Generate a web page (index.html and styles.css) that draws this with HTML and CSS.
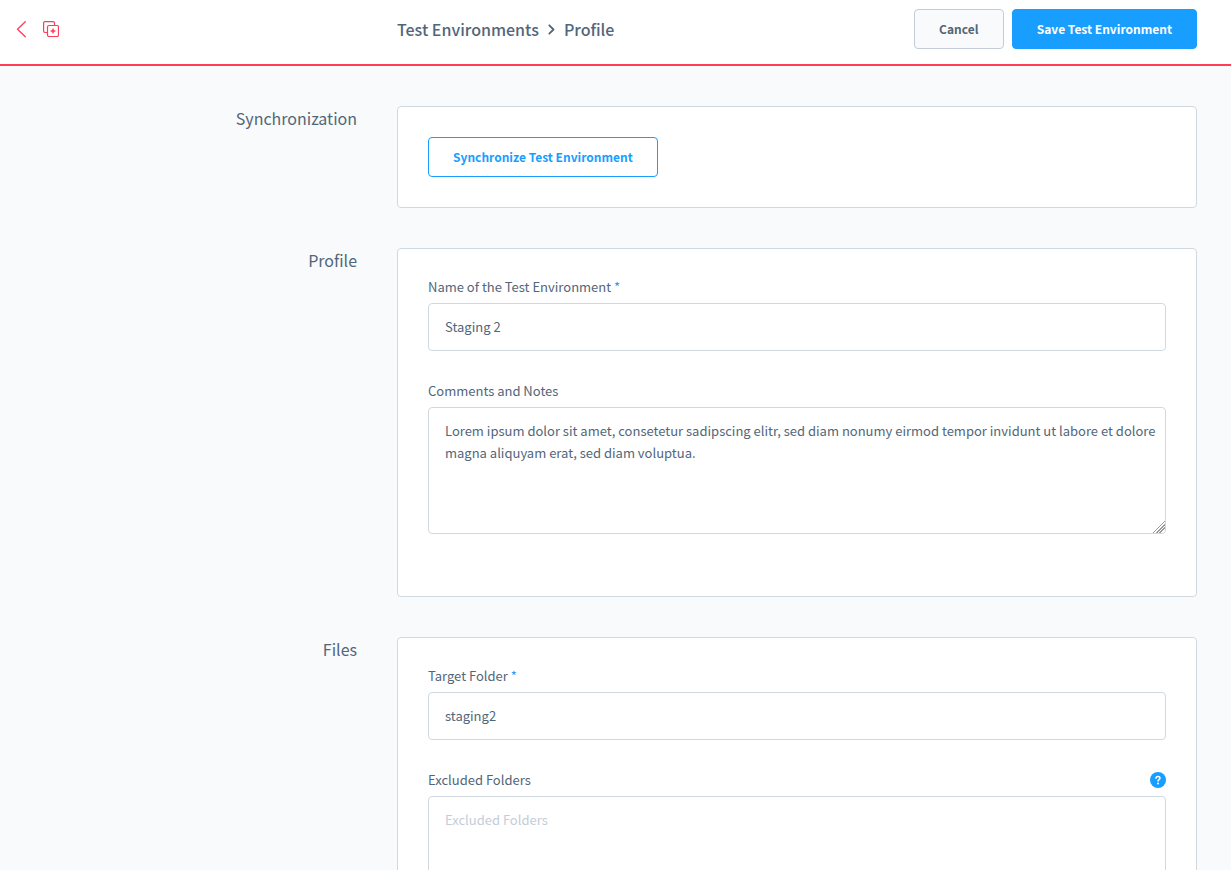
FILE: index.html
```html
<!DOCTYPE html>
<html lang="en">
<head>
<meta charset="utf-8">
<meta name="viewport" content="width=device-width, initial-scale=1">
<title>Test Environments - Profile</title>
<link rel="stylesheet" href="styles.css">
</head>
<body class="app">
<header class="header">
  <nav class="header-nav" aria-label="Module">
    <a class="icon-link" href="#" aria-label="Back">
      <svg width="10" height="17" viewBox="0 0 10 17" fill="none" stroke="currentColor" stroke-width="1.3" stroke-linecap="round" stroke-linejoin="round"><path d="M9.300 .8 1.500 8.300 9.300 15.800"/></svg>
    </a>
    <a class="icon-link" href="#" aria-label="Test environments">
      <svg width="16" height="16" viewBox="0 0 16 16" fill="none" stroke="currentColor" stroke-width="1.2" stroke-linecap="round" stroke-linejoin="round"><path d="M4.200 11.500H2A1.400 1.400 0 0 1 .6 10.100V2A1.400 1.400 0 0 1 2 .6h8.100A1.400 1.400 0 0 1 11.500 2v2.200"/><rect x="4.500" y="4.500" width="11" height="11" rx="1.500"/><path d="M10 8.200v3.600M8.200 10h3.600" stroke-width="1.600"/></svg>
    </a>
  </nav>
  <h1 class="title">
    <span>Test Environments</span>
    <svg width="7" height="11" viewBox="0 0 7 11" fill="none" stroke="currentColor" stroke-width="1.8" stroke-linecap="round" stroke-linejoin="round"><path d="M1.300 1.300 5.500 5.500 1.300 9.700"/></svg>
    <span>Profile</span>
  </h1>
  <div class="actions">
    <button class="button" type="button">Cancel</button>
    <button class="button button-primary" type="submit" form="profile-form">Save Test Environment</button>
  </div>
</header>
<main class="content">
  <form class="sections" id="profile-form">
    <section class="section">
      <h2 class="section-title">Synchronization</h2>
      <div class="card">
        <button class="button button-outline" type="button">Synchronize Test Environment</button>
      </div>
    </section>
    <section class="section">
      <h2 class="section-title">Profile</h2>
      <div class="card">
        <div class="field">
          <div class="field-head"><label for="name">Name of the Test Environment <span class="required">*</span></label></div>
          <input class="control" id="name" type="text" value="Staging 2">
        </div>
        <div class="field">
          <div class="field-head"><label for="notes">Comments and Notes</label></div>
          <textarea class="control control-area" id="notes" spellcheck="false">Lorem ipsum dolor sit amet, consetetur sadipscing elitr, sed diam nonumy eirmod tempor invidunt ut labore et dolore magna aliquyam erat, sed diam voluptua.</textarea>
        </div>
      </div>
    </section>
    <section class="section">
      <h2 class="section-title">Files</h2>
      <div class="card">
        <div class="field">
          <div class="field-head"><label for="folder">Target Folder <span class="required">*</span></label></div>
          <input class="control" id="folder" type="text" value="staging2">
        </div>
        <div class="field">
          <div class="field-head">
            <label for="excluded">Excluded Folders</label>
            <button class="help" type="button" aria-label="Help">
              <svg width="16" height="16" viewBox="0 0 16 16" fill="none"><circle cx="8" cy="8" r="8" fill="#189eff"/><path d="M6 6.300C6 5 6.900 4.400 8 4.400s2 .7 2 1.800c0 1.400-2 1.400-2 2.800" stroke="#fff" stroke-width="1.500" stroke-linecap="round"/><circle cx="8" cy="11.500" r="1" fill="#fff"/></svg>
            </button>
          </div>
          <textarea class="control control-area" id="excluded" placeholder="Excluded Folders"></textarea>
        </div>
      </div>
    </section>
  </form>
</main>
</body>
</html>
```

FILE: styles.css
```css
*, *::before, *::after {
  box-sizing: border-box;
}

.app {
  display: flex;
  flex-direction: column;
  height: 100vh;
  margin: 0;
  background: #f9fafb;
  color: #52667a;
  font-family: "Source Sans Pro", "Noto Sans CJK SC", sans-serif;
  font-size: 13px;
  line-height: 22px;
}

.app button, .app input, .app textarea {
  font-family: inherit;
  line-height: inherit;
  color: inherit;
}

.header {
  display: grid;
  grid-template-columns: minmax(0, 1fr) minmax(0, 500px) 300px;
  flex: none;
  padding: 9px 34px 15px 0;
  background: #fff;
  border-bottom: 2px solid #ff3d58;
}

.header-nav {
  display: flex;
  align-items: center;
  gap: 17px;
  padding: 0 40px 0 16px;
}

.icon-link {
  display: flex;
  color: #ff3d58;
}

.title {
  display: flex;
  align-items: center;
  gap: 9px;
  margin: 0;
  font-size: 16px;
  line-height: 40px;
  font-weight: 500;
  white-space: nowrap;
}

.actions {
  display: flex;
  justify-content: flex-end;
  gap: 8px;
}

.button {
  min-width: 90px;
  height: 40px;
  padding: 0 24px;
  border: 1px solid #c3cdd8;
  border-radius: 4px;
  background: #f9fafb;
  font-size: 12px;
  font-weight: 700;
  white-space: nowrap;
}

.app .button-primary {
  border-color: #189eff;
  background: #189eff;
  color: #fff;
}

.app .button-outline {
  border-color: #189eff;
  background: #fff;
  color: #189eff;
}

.content {
  flex: 1;
  min-height: 0;
  overflow-y: auto;
  scrollbar-width: none;
}

.sections {
  display: flex;
  flex-direction: column;
  gap: 40px;
  padding: 40px 0;
}

.section {
  display: grid;
  grid-template-columns: minmax(0, 1fr) minmax(0, 800px);
  column-gap: 40px;
  padding-right: 34px;
}

.section-title {
  margin: 0;
  font-size: 16px;
  line-height: 24px;
  font-weight: 400;
  text-align: right;
}

.card {
  padding: 30px;
  background: #fff;
  border: 1px solid #d1d9e0;
  border-radius: 4px;
}

.field {
  margin-bottom: 32px;
}

.field-head {
  display: flex;
  align-items: center;
  justify-content: space-between;
  height: 16px;
  margin-bottom: 8px;
}

.required {
  color: #189eff;
}

.control {
  display: block;
  width: 100%;
  height: 48px;
  padding: 11px 16px 13px;
  border: 1px solid #d1d9e0;
  border-radius: 4px;
  background: #fff;
  font-size: 13px;
  outline: none;
}

.control::placeholder {
  color: #c3cdd8;
  opacity: 1;
}

.control-area {
  height: 127px;
  padding: 12px 4px 12px 16px;
  resize: vertical;
}

.control-area::-webkit-resizer {
  background: linear-gradient(135deg, transparent 58%, #999 58% 63%, transparent 63% 69%, #999 69% 74%, transparent 74% 80%, #999 80% 85%, transparent 85%);
}

.help {
  display: flex;
  padding: 0;
  border: 0;
  background: none;
}
```
